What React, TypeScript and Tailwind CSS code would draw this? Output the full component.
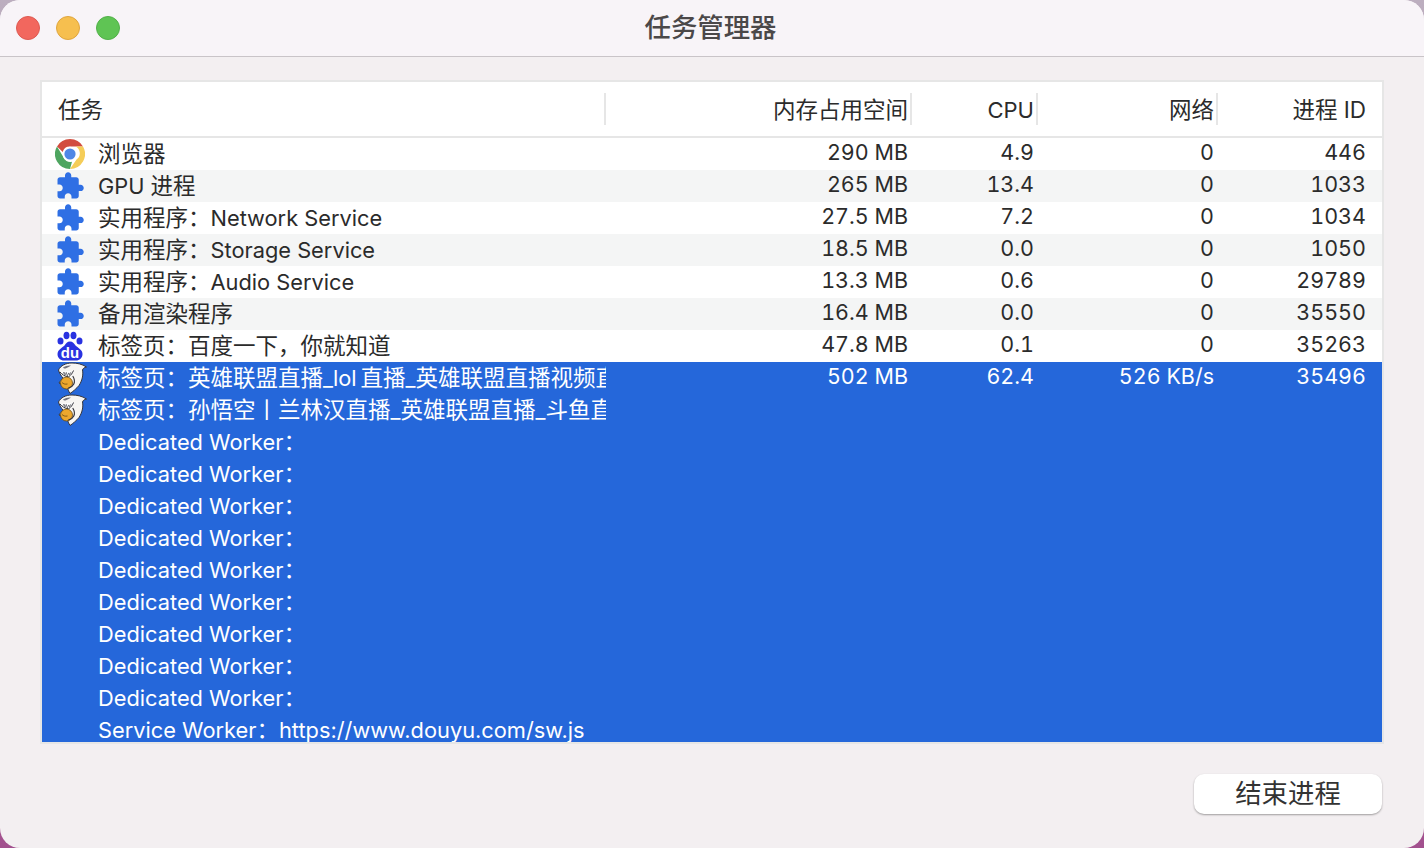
import type { ReactNode } from 'react'

type IconKind = 'chrome' | 'puzzle' | 'baidu' | 'shark' | null

interface Row {
  icon: IconKind
  name: string
  mem?: string
  cpu?: string
  net?: string
  pid?: string
}

const rows: Row[] = [
  { icon: 'chrome', name: '浏览器', mem: '290 MB', cpu: '4.9', net: '0', pid: '446' },
  { icon: 'puzzle', name: 'GPU 进程', mem: '265 MB', cpu: '13.4', net: '0', pid: '1033' },
  { icon: 'puzzle', name: '实用程序：Network Service', mem: '27.5 MB', cpu: '7.2', net: '0', pid: '1034' },
  { icon: 'puzzle', name: '实用程序：Storage Service', mem: '18.5 MB', cpu: '0.0', net: '0', pid: '1050' },
  { icon: 'puzzle', name: '实用程序：Audio Service', mem: '13.3 MB', cpu: '0.6', net: '0', pid: '29789' },
  { icon: 'puzzle', name: '备用渲染程序', mem: '16.4 MB', cpu: '0.0', net: '0', pid: '35550' },
  { icon: 'baidu', name: '标签页：百度一下，你就知道', mem: '47.8 MB', cpu: '0.1', net: '0', pid: '35263' },
  { icon: 'shark', name: '标签页：英雄联盟直播_lol\u2009直播_英雄联盟直播视频直播', mem: '502 MB', cpu: '62.4', net: '526 KB/s', pid: '35496' },
  { icon: 'shark', name: '标签页：孙悟空丨兰林汉直播_英雄联盟直播_斗鱼直播' },
  ...Array.from({ length: 9 }, (): Row => ({ icon: null, name: 'Dedicated Worker：' })),
  { icon: null, name: 'Service Worker：https://www.douyu.com/sw.js' },
]

function ChromeIcon() {
  return (
    <svg viewBox="0 0 30 30" className="h-[30px] w-[30px]">
      <path d="M15 0a15 15 0 0 1 13 7.500H15a7.500 7.500 0 0 0-7.200 5.400L2 7.500A15 15 0 0 1 15 0z" fill="#d24d3f" />
      <path d="M28 7.500A15 15 0 0 1 15 30l6.500-9.500a7.500 7.500 0 0 0-1-13z" fill="#f5cd58" />
      <path d="M15 30A15 15 0 0 1 2 7.500l6 10a7.500 7.500 0 0 0 9 5.200L15 30z" fill="#4ea560" />
      <circle cx="15" cy="15" r="7.300" fill="#fff" />
      <circle cx="15" cy="15" r="5.600" fill="#4f87e6" />
    </svg>
  )
}

function PuzzleIcon() {
  return (
    <svg viewBox="0 0 24 24" className="h-[30px] w-[30px]" fill="#2f6fe4">
      <path d="M20.5 11H19V7c0-1.1-.9-2-2-2h-4V3.5C13 2.12 11.88 1 10.5 1S8 2.12 8 3.5V5H4c-1.1 0-1.99.9-1.99 2v3.8H3.5c1.49 0 2.7 1.21 2.7 2.7s-1.21 2.7-2.7 2.7H2V20c0 1.1.9 2 2 2h3.8v-1.5c0-1.49 1.21-2.7 2.7-2.7 1.49 0 2.7 1.21 2.7 2.7V22H17c1.1 0 2-.9 2-2v-4h1.5c1.38 0 2.5-1.12 2.5-2.5S21.88 11 20.5 11z" />
    </svg>
  )
}

function BaiduIcon() {
  return (
    <svg viewBox="0 0 30 30" className="h-[30px] w-[30px]" fill="#2932e1">
      <ellipse cx="5.500" cy="10" rx="3" ry="3.600" />
      <ellipse cx="11.500" cy="4.500" rx="3" ry="3.800" />
      <ellipse cx="18.500" cy="4.500" rx="3" ry="3.800" />
      <ellipse cx="24.500" cy="10" rx="3" ry="3.600" />
      <path d="M15 10.500c2.800 0 4 2.200 5.500 4 2 2.200 7 4 7 8.500 0 4-3 6.500-6.500 6.500H9c-3.500 0-6.500-2.500-6.500-6.500 0-4.500 5-6.300 7-8.500 1.500-1.800 2.700-4 5.500-4z" />
      <text x="15" y="26.500" textAnchor="middle" fontSize="15" fontWeight="700" fill="#fff" fontFamily="Liberation Sans, sans-serif">du</text>
    </svg>
  )
}

function SharkIcon() {
  return (
    <svg viewBox="0 0 32 32" className="h-[32px] w-[32px]">
      {/* body, fin and tail */}
      <path d="M3.500 8C5.500 3.500 11 1 17 1c5 0 10 1 14.500 4-2.500 .5-3.500 1.500-4 3 1 5-.5 11-3.500 15.500-2.500 3-6 6-9 8-1-1.500-2-3.500-2.500-5.500-2.500-.5-5-2-6-4-1 0-2-.4-2.500-1 1-1.800 2.500-3.500 4.500-4C6 13.500 4 10.500 3.500 8z" fill="#f7f5f2" stroke="#34343c" strokeWidth="1" strokeLinejoin="round" />
      {/* eye and brow */}
      <path d="M8 5.500c2-1.500 5-2.300 8-2-1.500 1-3 1.800-5 2.800-1.200 .5-2.500 0-3-.8z" fill="#74747e" />
      {/* mouth */}
      <path d="M5 10c2 2.500 5 4.500 8.500 4.800 2.500-1.500 4-3.800 5-6.300" fill="#fff" stroke="#34343c" strokeWidth="1" strokeLinejoin="round" />
      <path d="M8 11.800l1-1.800 1 3 1.300-2.600 1 3.500 1.500-3 .8 2 1.500-3" fill="none" stroke="#34343c" strokeWidth="0.600" />
      {/* ball */}
      <circle cx="11.500" cy="21" r="6" fill="#eda72d" stroke="#6b4a12" strokeWidth="0.800" />
      <path d="M7 20.500c1.200 1.300 3 2 5.500 1.500" fill="none" stroke="#6b4a12" strokeWidth="0.800" />
      {/* arm */}
      <path d="M18 14.500c1.500 2.500 2 5 .8 7.500-1 2-3 3.500-5.300 4" fill="none" stroke="#34343c" strokeWidth="1.200" strokeLinecap="round" />
    </svg>
  )
}

function RowIcon({ kind }: { kind: IconKind }) {
  if (kind === 'chrome') return <ChromeIcon />
  if (kind === 'puzzle') return <PuzzleIcon />
  if (kind === 'baidu') return <BaiduIcon />
  if (kind === 'shark') return <SharkIcon />
  return null
}

// CJK glyphs run a little wider than the latin text in the original
function MixedText({ text }: { text: string }) {
  const parts = text.split(/([\u4e00-\u9fff\uff00-\uffef]+)/).filter(Boolean)
  return (
    <span className="whitespace-nowrap">
      {parts.map((part, i) =>
        /[\u4e00-\u9fff\uff00-\uffef]/.test(part) ? (
          <span key={i} className="text-[22.5px]">
            {part}
          </span>
        ) : (
          <span key={i} className="text-[21.8px]">
            {part}
          </span>
        ),
      )}
    </span>
  )
}

function HeaderCell({ children, className }: { children: ReactNode; className: string }) {
  return (
    <div className={`flex h-[32px] items-center justify-end border-r-2 border-[#e6e6e6] pr-[2px] pt-[2px] ${className}`}>
      {children}
    </div>
  )
}

function NumCell({ value, className }: { value?: string; className: string }) {
  return <div className={`h-full pt-[1px] text-right text-[21.5px] leading-[26px] tabular-nums ${className}`}>{value}</div>
}

export default function App() {
  return (
    <div className="h-[848px] w-[1424px] overflow-hidden bg-gradient-to-b from-[#bcaebf] to-[#a2508e] font-['Inter','Noto_Sans_CJK_SC',sans-serif] text-[22px] text-[#2b2b2b]">
      <div className="flex h-full flex-col overflow-hidden rounded-[20px] bg-[#f3eff1]">
        {/* Title bar */}
        <div className="relative flex h-[57px] shrink-0 items-center justify-center border-b border-[#c9c4c8] bg-[#f8f4f8]">
          <div className="absolute left-[16px] top-[16px] flex gap-[16px]">
            <span className="h-[24px] w-[24px] rounded-full border border-[#dd5a52] bg-[#f2675e]" />
            <span className="h-[24px] w-[24px] rounded-full border border-[#dfa53f] bg-[#f6bf4f]" />
            <span className="h-[24px] w-[24px] rounded-full border border-[#52b04a] bg-[#5fc454]" />
          </div>
          <span className="mr-[3px] text-[26.4px] font-medium text-[#4b4849]">任务管理器</span>
        </div>

        {/* Table */}
        <div className="mx-[40px] mt-[23px] h-[664px] shrink-0 overflow-hidden border-2 border-[#e6e6e6] bg-white">
          <div className="flex h-[56px] items-center border-b-2 border-[#e6e6e6]">
            <div className="flex h-[32px] w-[564px] items-center border-r-2 border-[#e6e6e6] pl-[16px] pt-[2px] text-[22.5px]">任务</div>
            <HeaderCell className="w-[306px] text-[22.5px]">内存占用空间</HeaderCell>
            <HeaderCell className="w-[126px] text-[22px]">CPU</HeaderCell>
            <HeaderCell className="w-[180px] text-[22.5px]">网络</HeaderCell>
            <div className="flex h-[32px] w-[164px] items-center justify-end pr-[16px] pt-[2px] text-[22.5px]">进程 ID</div>
          </div>
          {rows.map((row, i) => {
            const selected = i >= 7
            const stripe = !selected && i % 2 === 1
            return (
              <div
                key={i}
                className={`flex h-[32px] items-center ${selected ? 'bg-[#2567da] text-white' : stripe ? 'bg-[#f4f5f5]' : 'bg-white'}`}
              >
                <div className="flex h-full w-[564px] items-center overflow-hidden">
                  <div className="flex w-[56px] shrink-0 items-center pl-[13px]">
                    <RowIcon kind={row.icon} />
                  </div>
                  <MixedText text={row.name} />
                </div>
                <NumCell className="w-[306px] pr-[4px]" value={row.mem} />
                <NumCell className="w-[126px] pr-[4px]" value={row.cpu} />
                <NumCell className="w-[180px] pr-[4px]" value={row.net} />
                <NumCell className="w-[164px] pr-[16px]" value={row.pid} />
              </div>
            )
          })}
        </div>

        {/* Footer */}
        <div className="mx-[42px] mt-[30px] flex justify-end">
          <button className="flex h-[40px] w-[188px] items-center justify-center rounded-[10px] bg-white pb-[1px] text-[26.4px] text-[#333] shadow-[0_1px_2px_rgba(0,0,0,0.35)]">
            结束进程
          </button>
        </div>
      </div>
    </div>
  )
}
